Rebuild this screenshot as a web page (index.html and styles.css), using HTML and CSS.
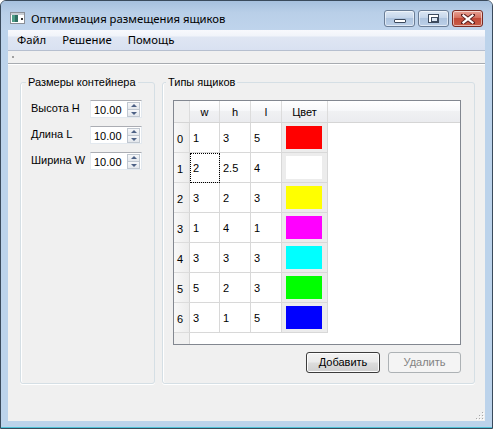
FILE: index.html
```html
<!DOCTYPE html>
<html lang="ru">
<head>
<meta charset="utf-8">
<title>Оптимизация размещения ящиков</title>
<link rel="stylesheet" href="styles.css">
</head>
<body>
<div class="window">
  <div class="titlebar">
    <svg class="app-icon" width="15" height="12" viewBox="0 0 15 12">
      <rect x="0.5" y="0.5" width="14" height="11" fill="#ffffff" stroke="#8a8f96"/>
      <rect x="1" y="1" width="13" height="2" fill="#c9ced4"/>
      <rect x="2" y="3" width="6" height="7" fill="#2f6f62"/>
      <rect x="2" y="3" width="3" height="7" fill="#4e9e88"/>
      <rect x="11" y="6" width="2" height="2" fill="#333"/>
    </svg>
    <span class="title">Оптимизация размещения ящиков</span>
    <div class="caption-buttons">
      <div class="cbtn cbtn-min"><span class="glyph-min"></span></div>
      <div class="cbtn cbtn-max"><span class="glyph-max"></span></div>
      <div class="cbtn cbtn-close">
        <svg width="14" height="10" viewBox="0 0 14 10">
          <path d="M2 1 L12 9 M12 1 L2 9" stroke="#5a2020" stroke-width="4" stroke-linecap="square"/>
          <path d="M2.5 1.5 L11.5 8.5 M11.5 1.5 L2.5 8.5" stroke="#ffffff" stroke-width="2.2" stroke-linecap="square"/>
        </svg>
      </div>
    </div>
  </div>
  <div class="client">
    <div class="menubar">
      <span class="menu-item">Файл</span>
      <span class="menu-item">Решение</span>
      <span class="menu-item">Помощь</span>
    </div>
    <div class="toolbar"><span class="handle"></span></div>
    <div class="content">
      <fieldset class="group group-size">
        <legend>Размеры контейнера</legend>
        <div class="field-row">
          <span class="field-label">Высота H</span>
          <div class="spin"><span class="spin-value">10.00</span><span class="spin-arrows"><span class="arr arr-up"></span><span class="arr arr-down"></span></span></div>
        </div>
        <div class="field-row">
          <span class="field-label">Длина L</span>
          <div class="spin"><span class="spin-value">10.00</span><span class="spin-arrows"><span class="arr arr-up"></span><span class="arr arr-down"></span></span></div>
        </div>
        <div class="field-row">
          <span class="field-label">Ширина W</span>
          <div class="spin"><span class="spin-value">10.00</span><span class="spin-arrows"><span class="arr arr-up"></span><span class="arr arr-down"></span></span></div>
        </div>
      </fieldset>
      <fieldset class="group group-types">
        <legend>Типы ящиков</legend>
        <div class="grid">
          <div class="hrow">
            <div class="hcell corner"></div>
            <div class="hcell c-w">w</div>
            <div class="hcell c-h">h</div>
            <div class="hcell c-l">l</div>
            <div class="hcell c-color">Цвет</div>
            <div class="hcell c-fill"></div>
          </div>
          <div class="drow"><div class="vcell">0</div><div class="dcell c-w">1</div><div class="dcell c-h">3</div><div class="dcell c-l">5</div><div class="ccell c-color"><span class="swatch sw-red"></span></div></div>
          <div class="drow"><div class="vcell">1</div><div class="dcell c-w focus">2</div><div class="dcell c-h">2.5</div><div class="dcell c-l">4</div><div class="ccell c-color"><span class="swatch sw-white"></span></div></div>
          <div class="drow"><div class="vcell">2</div><div class="dcell c-w">3</div><div class="dcell c-h">2</div><div class="dcell c-l">3</div><div class="ccell c-color"><span class="swatch sw-yellow"></span></div></div>
          <div class="drow"><div class="vcell">3</div><div class="dcell c-w">1</div><div class="dcell c-h">4</div><div class="dcell c-l">1</div><div class="ccell c-color"><span class="swatch sw-magenta"></span></div></div>
          <div class="drow"><div class="vcell">4</div><div class="dcell c-w">3</div><div class="dcell c-h">3</div><div class="dcell c-l">3</div><div class="ccell c-color"><span class="swatch sw-cyan"></span></div></div>
          <div class="drow"><div class="vcell">5</div><div class="dcell c-w">5</div><div class="dcell c-h">2</div><div class="dcell c-l">3</div><div class="ccell c-color"><span class="swatch sw-green"></span></div></div>
          <div class="drow"><div class="vcell">6</div><div class="dcell c-w">3</div><div class="dcell c-h">1</div><div class="dcell c-l">5</div><div class="ccell c-color"><span class="swatch sw-blue"></span></div></div>
          <div class="erow"><div class="vfill"></div></div>
        </div>
        <div class="buttons">
          <button class="btn btn-default" type="button">Добавить</button>
          <button class="btn btn-disabled" type="button" disabled>Удалить</button>
        </div>
      </fieldset>
    </div>
    <svg class="grip" width="9" height="9" viewBox="0 0 9 9">
      <g fill="#a8a8a8">
        <rect x="7" y="1" width="1" height="1"/>
        <rect x="4" y="4" width="1" height="1"/><rect x="7" y="4" width="1" height="1"/>
        <rect x="1" y="7" width="1" height="1"/><rect x="4" y="7" width="1" height="1"/><rect x="7" y="7" width="1" height="1"/>
      </g>
      <g fill="#ffffff">
        <rect x="8" y="2" width="1" height="1"/>
        <rect x="5" y="5" width="1" height="1"/><rect x="8" y="5" width="1" height="1"/>
        <rect x="2" y="8" width="1" height="1"/><rect x="5" y="8" width="1" height="1"/><rect x="8" y="8" width="1" height="1"/>
      </g>
    </svg>
  </div>
</div>
</body>
</html>
```
FILE: styles.css
```css
* { box-sizing: border-box; }
html, body { margin: 0; padding: 0; background: #ffffff; }
body {
  font-family: "Liberation Sans", Arial, sans-serif;
  font-size: 11px;
  color: #000;
}
.window {
  width: 493px;
  height: 429px;
  border: 1px solid #3a4a5c;
  border-radius: 6px 6px 0 0;
  background: #bcd3eb;
  padding: 0 7px 7px 7px;
  display: flex;
  flex-direction: column;
  box-shadow: inset 0 -1px 0 #4fc2d6;
}
.titlebar {
  height: 29px;
  margin: 0 -7px;
  padding: 0 9px;
  display: flex;
  align-items: flex-start;
  background: linear-gradient(#a6c0de, #b9cfe8 40%, #bfd4ec);
  border-radius: 5px 5px 0 0;
}
.app-icon { margin-top: 11px; margin-right: 6px; flex: none; }
.title {
  margin-top: 10px;
  line-height: 16px;
  white-space: nowrap;
  font-family: "Noto Sans", "Open Sans", sans-serif;
  font-size: 11.3px;
}
.caption-buttons { margin-left: auto; margin-top: 9px; display: flex; gap: 2px; }
.cbtn {
  width: 31px;
  height: 17px;
  border: 1px solid #6a7d96;
  border-radius: 3px;
  display: flex;
  align-items: center;
  justify-content: center;
  background: linear-gradient(#dce7f4, #c5d6eb 45%, #aec4df 50%, #bcd0e8);
  box-shadow: inset 0 0 0 1px rgba(255,255,255,0.55);
}
.cbtn + .cbtn { margin-left: 1px; }
.cbtn-close {
  border-color: #7a2a22;
  background: linear-gradient(#e7a295, #d6705f 45%, #c24a38 50%, #c85d48);
}
.glyph-min {
  width: 12px; height: 4px; margin-top: 5px;
  background: #fff; border: 1px solid #3c4a5e; border-radius: 1px;
}
.glyph-max {
  width: 11px; height: 9px;
  border: 1px solid #3c4a5e;
  background: #fff;
  box-shadow: inset 0 0 0 1px #fff;
  position: relative;
}
.glyph-max::after {
  content: "";
  position: absolute; left: 2px; top: 2px; width: 5px; height: 3px;
  border: 1px solid #3c4a5e; background: #dce7f4;
}

.client {
  flex: 1;
  background: #f0f0f0;
  display: flex;
  flex-direction: column;
  position: relative;
}
.menubar {
  height: 21px;
  border-bottom: 1px solid #b6bfcf;
  background: linear-gradient(#f8f9fd 0, #f1f4fa 30%, #dfe6f3 35%, #d9e1f1 100%);
  display: flex;
  align-items: center;
  padding-left: 1px;
  font-family: "Noto Sans", "Open Sans", sans-serif;
  font-size: 11.3px;
}
.menu-item { padding: 0 8px; line-height: 18px; }
.toolbar {
  height: 13px;
  border-bottom: 1px solid #a7abb0;
  box-shadow: 0 1px 0 #ffffff;
  position: relative;
}
.handle {
  display: block;
  width: 2px; height: 2px;
  background: #a0a0a0;
  margin: 5px 0 0 4px;
}
.content {
  flex: 1;
  display: flex;
  gap: 7px;
  padding: 10px 10px 37px 12px;
}
.group {
  margin: 0;
  border: 1px solid #d5dfe5;
  border-radius: 3px;
  box-shadow: 0 1px 0 #ffffff, inset 1px 0 0 #fff;
  min-width: 0;
}
.group legend {
  padding: 0 2px;
  line-height: 16px;
}
.group-size { width: 135px; padding: 10px 0 0 10px; }
.group-size legend { margin-left: -5px; }
.group-types { width: 313px; padding: 10px 13px 0 10px; }
.group-types legend { margin-left: -7px; }

.field-row { display: flex; align-items: center; height: 18px; }
.field-row + .field-row { margin-top: 8px; }
.field-label { width: 59px; margin-top: -3px; white-space: nowrap; }
.spin {
  width: 52px;
  height: 18px;
  background: #fff;
  border: 1px solid #e3e9ef;
  border-top-color: #abadb3;
  display: flex;
  align-items: center;
  padding: 0 1px 0 3px;
}
.spin-value { flex: 1; line-height: 14px; margin-top: 2px; }
.spin-arrows { display: flex; flex-direction: column; }
.arr {
  width: 13px; height: 8px;
  border: 1px solid #c0c7d0;
  background: linear-gradient(#f6f7f9, #e3e7ec);
  position: relative;
}
.arr + .arr { margin-top: -1px; }
.arr::after {
  content: "";
  position: absolute; left: 3px; width: 0; height: 0;
  border-left: 3px solid transparent; border-right: 3px solid transparent;
}
.arr-up::after { top: 1px; border-bottom: 3px solid #4d6185; }
.arr-down::after { top: 2px; border-top: 3px solid #4d6185; }

.grid {
  width: 288px;
  height: 245px;
  border: 1px solid #828790;
  background: #fff;
  display: flex;
  flex-direction: column;
}
.hrow { display: flex; height: 22px; border-bottom: 1px solid #d5d5d5; flex: none; }
.hcell {
  background: linear-gradient(#ffffff, #f7f8fa 45%, #f0f1f3 50%, #ebecef);
  border-right: 1px solid #dcdcdc;
  text-align: center;
  line-height: 22px;
}
.corner { width: 16px; background: #f0f0f0; }
.c-w { width: 30px; }
.c-h { width: 31px; }
.c-l { width: 31px; }
.c-color { width: 46px; }
.c-fill { flex: 1; border-right: 0; }
.drow { display: flex; height: 30px; flex: none; }
.vcell {
  width: 16px;
  background: linear-gradient(90deg, #f8f8f8, #ececec);
  border-right: 1px solid #d5d5d5;
  border-bottom: 1px solid #dcdcdc;
  padding-left: 3px;
  line-height: 30px;
  padding-top: 1px;
}
.dcell {
  border-right: 1px solid #d8d8d8;
  border-bottom: 1px solid #d8d8d8;
  padding-left: 3px;
  line-height: 30px;
}
.focus { outline: 1px dotted #000; outline-offset: -1px; }
.ccell {
  background: #ececec;
  border-right: 1px solid #d8d8d8;
  border-bottom: 1px solid #d8d8d8;
  padding: 3px 0 0 4px;
}
.swatch { display: block; width: 36px; height: 23px; }
.sw-red { background: #ff0000; }
.sw-white { background: #ffffff; }
.sw-yellow { background: #ffff00; }
.sw-magenta { background: #ff00ff; }
.sw-cyan { background: #00ffff; }
.sw-green { background: #00ff00; }
.sw-blue { background: #0000ff; }
.erow { flex: 1; display: flex; }
.vfill { width: 16px; background: #f0f0f0; border-right: 1px solid #d5d5d5; }

.buttons {
  display: flex;
  justify-content: flex-end;
  gap: 8px;
  width: 288px;
  margin-top: 7px;
}
.btn {
  height: 21px;
  font: inherit;
  padding: 0;
  border-radius: 3px;
  line-height: 17px;
}
.btn-default {
  width: 74px;
  border: 1px solid #3c3c3c;
  background: linear-gradient(#f2f2f2, #ebebeb 48%, #dddddd 52%, #cfcfcf);
  box-shadow: inset 0 0 0 1px #fcfcfc;
  color: #000;
}
.btn-disabled {
  width: 73px;
  border: 1px solid #adb2b5;
  background: #f4f4f4;
  color: #838383;
}
.grip { position: absolute; right: 1px; bottom: 1px; }
```
